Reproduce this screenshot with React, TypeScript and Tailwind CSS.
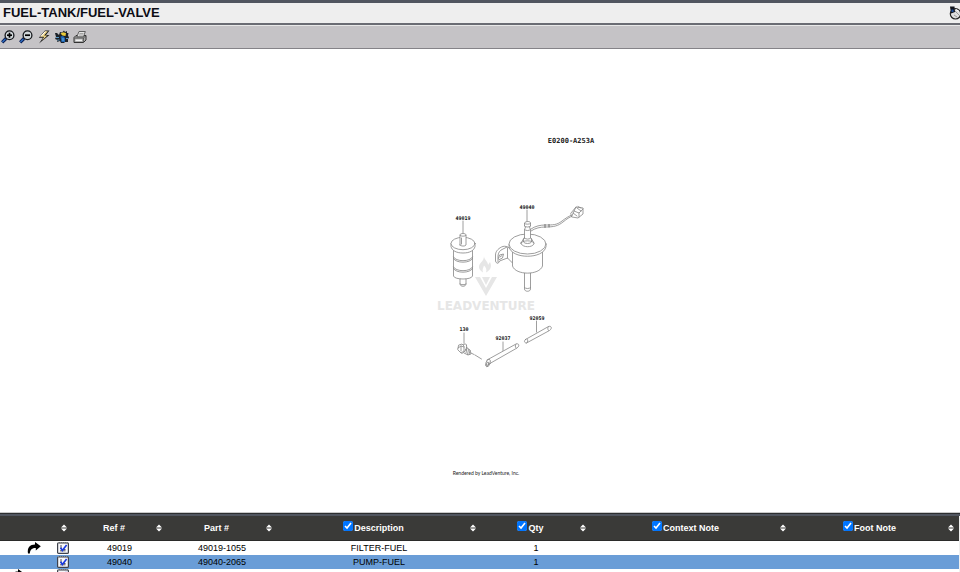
import type { ReactNode } from "react"

interface Column {
  id: string
  label?: string
  toggle?: boolean
  width: string
}

interface Part {
  refNo: string
  partNo: string
  description: string
  qty: string
  selected?: boolean
}

const columns: Column[] = [
  { id: "actions", width: "w-[72px]" },
  { id: "ref", label: "Ref #", width: "w-[95px]" },
  { id: "part", label: "Part #", width: "w-[110px]" },
  { id: "description", label: "Description", toggle: true, width: "w-[204px]" },
  { id: "qty", label: "Qty", toggle: true, width: "w-[110px]" },
  { id: "context", label: "Context Note", toggle: true, width: "w-[200px]" },
  { id: "foot", label: "Foot Note", toggle: true, width: "w-[168px]" },
]

const parts: Part[] = [
  { refNo: "49019", partNo: "49019-1055", description: "FILTER-FUEL", qty: "1" },
  { refNo: "49040", partNo: "49040-2065", description: "PUMP-FUEL", qty: "1", selected: true },
]

function Magnifier({ plus }: { plus?: boolean }) {
  return (
    <svg viewBox="0 0 14 14" className="size-[14px]" fill="none">
      <path d="M5 8.5 1.2 12.3" stroke="#0a1c50" strokeWidth="3.2" />
      <path d="M4.4 9 1.4 12" stroke="#2f6fc4" strokeWidth="1.3" />
      <circle cx="8.5" cy="5.2" r="4.4" fill="#d3d9dc" stroke="#15181c" strokeWidth="1.3" />
      <path d="M6 5.2h5" stroke="#000" strokeWidth="1.7" />
      {plus && <path d="M8.5 2.7v5" stroke="#000" strokeWidth="1.7" />}
    </svg>
  )
}

function BoltIcon() {
  return (
    <svg viewBox="0 0 14 14" className="size-[14px]">
      <path d="M8 .5h4.500L9 5h3.500L2 13.500 6 7.800H1.800z" fill="#222" />
      <path d="M8 1.200h2.800L7 5.600h3.200L5 10.500l2.200-3.700H3.200z" fill="#f5dc8c" />
      <path d="M8.300 1.500 4 6.400" stroke="#fff" />
    </svg>
  )
}

function HotspotIcon() {
  return (
    <svg viewBox="0 0 14 14" className="size-[14px]">
      <path d="M0 3h2l2 2 1-3 2 .5L9 .5l1 1.500 2-1v2h1.500L13 5.500l1 2-1 1.500v3h-3l-1 1H6l-1-2-3 1 .5-2L0 9l1-2z" fill="#1c2229" />
      <path d="M5.500 3.500 8 2.200l3 .8-.5 3-3-.5z" fill="#e8cb3a" />
      <path d="M5.500 6.500 8 6l2 2v4H6.500z" fill="#1d66b5" />
      <path d="M1 7.500h3M2.500 10h2M11 8.500h2" stroke="#5598c8" />
      <path d="M8 8v3" stroke="#72b5e6" />
    </svg>
  )
}

function PrinterIcon() {
  return (
    <svg viewBox="0 0 14 14" className="size-[14px]" strokeLinejoin="round">
      <path d="M1 7.500 3 5.500h10v4.500l-2.500 2.500H1z" fill="#aaa" stroke="#333" />
      <path d="M3.800 6.800 6 1.500h6.300L10.500 6.800z" fill="#e4e4e4" stroke="#444" strokeWidth=".8" />
      <path d="M6.500 3.500h4M6 5h4" stroke="#888" strokeWidth=".7" />
      <path d="M1.500 8h8.800L13 5.800M10.400 8v4" stroke="#444" strokeWidth=".8" fill="none" />
      <path d="M2.500 10.200H9" stroke="#fff" strokeWidth="1.300" />
    </svg>
  )
}

function HelpIcon() {
  return (
    <svg viewBox="0 0 14 14" className="size-[14px]">
      <circle cx="7.500" cy="7.800" r="5.200" fill="#dedede" stroke="#222" strokeWidth="1.200" />
      <path d="M2 .5h4.500L7 6 3 7.500z" fill="#10141c" />
      <path d="M3.500 3.500h2V6h-2z" fill="#1f4f9c" />
      <path d="m7 5 5 5M6 9l3 2" stroke="#999" />
      <path d="m8 3.500 3 2" stroke="#fff" />
    </svg>
  )
}

function SortIcon() {
  return (
    <svg viewBox="0 0 6 8" className="h-[8px] w-[6px]" fill="#fff">
      <path d="M3 .5 6 3.500H0zM3 7.500 0 4.500h6z" />
    </svg>
  )
}

function ArrowIcon() {
  return (
    <svg viewBox="0 0 14 12" className="h-[12px] w-[14px]">
      <path d="M1 11.500C0 5.500 3 2.500 8 2.500V0l5.800 4.300L8.800 8.500V6C5 6 3.200 7.500 2.800 11.500z" fill="#000" />
    </svg>
  )
}

function NoteIcon() {
  return (
    <svg viewBox="0 0 12 12" className="size-[12px]">
      <rect x=".6" y=".8" width="10.800" height="10.600" rx="1" fill="#f7f7fa" stroke="#3d414b" strokeWidth="1.200" />
      <path d="M1 1h10" stroke="#999" strokeWidth="1.400" strokeDasharray="1 1" />
      <path d="M3 4h2M3 6h2M6.500 7.500h2M3 8.800h5.500" stroke="#555" />
      <path d="M3.600 5.800 5.300 8.500 9.600 3" stroke="#1838e0" strokeWidth="1.600" fill="none" />
    </svg>
  )
}

function ToolButton({ label, children }: { label: string; children: ReactNode }) {
  return (
    <button type="button" aria-label={label} className="size-[14px]">
      {children}
    </button>
  )
}

function PartsDiagram() {
  return (
    <svg viewBox="0 49 960 463" className="h-full w-full" fill="none" role="img" aria-label="Fuel tank parts">
      {/* watermark */}
      <g fill="#e6e6e6">
        <path d="M484 256c0 4 4 5 4 9l2-3c2 4 1 8-4 10.500 1-3 0-5-2-7-1 3-2 4-1 7-5-3-5-7-2-10 2-2 3-4 3-6.500z" />
        <path d="M475 277h5l6 11 6-11h5l-11 19z" />
        <path d="M482 277h8l-4 8z" />
        <text x="486" y="310" textAnchor="middle" className="font-['DejaVu_Sans'] text-[12px] font-bold">
          LEADVENTURE
        </text>
      </g>

      <g stroke="#858585" strokeWidth="0.8" strokeLinecap="round" strokeLinejoin="round">
        {/* 49019 filter */}
        <path d="M463 221v12" />
        <path d="M453.500 250v26c1 4 18 4 19 0v-26" />
        <path d="M460 279v5c0 3 6 3 6 0v-5" />
        <path d="M460 284c1 1 5 1 6 0" />
        <path d="M453.500 257c2 5 17 5 19 0M453.500 258.500c2 5 17 5 19 0M453.500 267c2 5 17 5 19 0M453.500 268.500c2 5 17 5 19 0" />
        <path d="M451 243.500v3c1 4 5 6.500 12 6.500s11-2.500 12-6.500v-3" fill="#fff" />
        <ellipse cx="463" cy="243.500" rx="12" ry="6.200" fill="#fff" />
        <path d="M460 245v-10c0-2 6-2 6 0v10c-1 1.500-5 1.500-6 0z" fill="#fff" />
        <path d="M460 235.500c1 1 5 1 6 0M461.500 238v6" />

        {/* 49040 pump */}
        <path d="M527 210v12" />
        <path d="M524.500 272v17c0 3 6 3 6 0v-17M524.500 287.500c1 1.500 5 1.500 6 0" />
        <path d="M512.500 250l-5-3c-2-1-4-1-6 0-4 2-6 5-6 8v6c1 3 3 3 4 0l8-3 5 5" fill="#fff" />
        <path d="M498 262v-6c0-3 2-6 5-7l4-2M507.500 248v10M498.500 258l1-3 4-1-1 4-3 1.500zM500 257l2-1.500" />
        <path d="M512.500 250v16c3 9.500 27 9.500 30 0v-16" fill="#fff" />
        <path d="M509 244.500v2c2 13 35 13 37 0v-2" fill="#fff" />
        <ellipse cx="527.500" cy="244" rx="18.500" ry="10" fill="#fff" />
        <path d="M521 243l3-5h7l3 5c0 5-13 5-13 0z" fill="#fff" />
        <path d="M521 243c1-3 12-3 13 0M523.500 239v3c1 2 7 2 8 0v-3" />
        <path d="M524.500 238v-8c0-1 1-2 1-3l-1-1v-3c1-2 6-2 6 0v3l-1 1 1 3v8c-1 1.500-5 1.500-6 0z" fill="#fff" />
        <path d="M524.500 226c1 1.500 5 1.500 6 0M524.500 229.500c1 1.500 5 1.500 6 0M524.500 223.500c1 1 5 1 6 0" />
        <path d="M531 229c4-3 10-4 14-4 8 0 12 0 17-4 4-3 7-5 10-6M531 231c4-3 10-4 14-4 9 0 13-1 18-5 4-3 6-5 10-6" />
        <path d="M545 224.500v3M549 224.500v2.500" stroke="#555" />
        <path d="M571 213l5-6 7 1v6l-5 4-6-1z" fill="#fff" />
        <path d="M576 207l-2 4 5 2 4-4M574 211l-2 5M579 213v4M577 208l4 3M573 213l4 3M578 206.500l3 1.500" />

        {/* 130 bolt */}
        <path d="M464 333v10" />
        <path d="M466 347l4 3 1 4-3 1-4-2" fill="#fff" />
        <ellipse cx="463.500" cy="348.500" rx="2.600" ry="5" transform="rotate(25 463.500 348.500)" fill="#fff" />
        <path d="M459 345l3-1 2 2v5l-3 2-3-3z" fill="#fff" />
        <path d="M458 348l3-2 3 1M461 346v5M467 348l-1 5M468.500 349.500l-1 5M470 350.500l-1 4" />
        <path d="M471 353l3 1.500M475 355l6.500 4" />

        {/* 92037 and 92059 tubes */}
        <path d="M503 342v10M536.500 321v11" />
        <path d="M487 360l29-16c3-1 4 2 1 4l-28 16" fill="#fff" />
        <ellipse cx="488" cy="363" rx="2" ry="4" transform="rotate(20 488 363)" fill="#fff" />
        <ellipse cx="487.500" cy="364" rx="1" ry="2" transform="rotate(20 487.500 364)" />
        <path d="M525.500 339.500l23-13c3-1 4 2 1 4l-23 12.500c-2 0-3-2-1-3.500zM527 339c1.500 1 1 3-.5 4M516 344c-1 1-1 3 0 4M548.500 326.500c-1 1-1 3 0 4" fill="#fff" />
      </g>

      <g fill="#111" textAnchor="middle" className="font-['DejaVu_Sans_Mono'] text-[5px] font-bold">
        <text x="463" y="220">49019</text>
        <text x="527" y="209">49040</text>
        <text x="464" y="331">130</text>
        <text x="503" y="340">92037</text>
        <text x="537" y="320">92059</text>
      </g>
      <text x="571" y="143" fill="#222" textAnchor="middle" className="font-['DejaVu_Sans_Mono'] text-[7px] font-bold">
        E0200-A253A
      </text>
      <text x="486" y="475" fill="#222" textAnchor="middle" className="font-['Lato',sans-serif] text-[5px]">
        Rendered by LeadVenture, Inc.
      </text>
    </svg>
  )
}

function HeaderCell({ column }: { column: Column }) {
  return (
    <th scope="col" className={`${column.width} h-[24px] p-0 font-bold`}>
      <div className="flex items-center pr-[5px]">
        <div className="flex flex-1 items-center justify-center">
          {column.toggle ? (
            <label className="flex items-center gap-px">
              <input type="checkbox" defaultChecked className="mb-[3px] size-[10px] accent-[#0075ff]" />
              {column.label}
            </label>
          ) : (
            column.label
          )}
        </div>
        <button type="button" aria-label={`Sort by ${column.label ?? "note"}`}>
          <SortIcon />
        </button>
      </div>
    </th>
  )
}

function RowActions({ arrow, nested }: { arrow?: boolean; nested?: boolean }) {
  return (
    <div className={`flex items-center justify-end pr-[3px] ${nested ? "gap-[33px]" : "gap-[16px]"}`}>
      {arrow && <ArrowIcon />}
      <button type="button" aria-label="Part note">
        <NoteIcon />
      </button>
    </div>
  )
}

export default function App() {
  return (
    <div className="flex h-screen flex-col overflow-hidden bg-white font-['Liberation_Sans',Arial,sans-serif] text-black">
      <header className="flex h-[25px] shrink-0 items-center justify-between overflow-hidden border-t-[3px] border-b-2 border-t-[#50555f] border-b-[#6a6c73] bg-[#eeeeee] pl-[3px]">
        <h1 className="text-[13px] leading-5 font-bold text-[#0c0c14]">FUEL-TANK/FUEL-VALVE</h1>
        <button type="button" aria-label="Help" className="-mr-[2px] size-[14px]">
          <HelpIcon />
        </button>
      </header>

      <div className="flex h-[24px] shrink-0 items-center gap-[4px] border-t border-b border-t-[#e8e8e8] border-b-[#858388] bg-[#c5c3c6] px-[1px]">
        <ToolButton label="Zoom in">
          <Magnifier plus />
        </ToolButton>
        <ToolButton label="Zoom out">
          <Magnifier />
        </ToolButton>
        <ToolButton label="Refresh">
          <BoltIcon />
        </ToolButton>
        <ToolButton label="Hotspots">
          <HotspotIcon />
        </ToolButton>
        <ToolButton label="Print">
          <PrinterIcon />
        </ToolButton>
      </div>

      <main className="min-h-0 flex-1">
        <PartsDiagram />
      </main>

      <section className="h-[60px] shrink-0 overflow-hidden border-t border-[#c9c9c9]">
        <div className="h-[3px] border-t border-[#2c2e30] bg-[#50555f]" />
        <div className="bg-[#f0f0f0] pr-px">
          <table className="w-full table-fixed border-collapse bg-white text-center text-[9px] leading-[14px]">
            <thead className="border-b border-[#2b2b2a] bg-[#3a3a38] text-white">
              <tr>
                {columns.map((column) => (
                  <HeaderCell key={column.id} column={column} />
                ))}
              </tr>
            </thead>
            <tbody>
              {parts.map((part) => (
                <tr key={part.refNo} className={part.selected ? "bg-[#6a9dd7]" : "bg-white"}>
                  <td className="p-0">
                    <RowActions arrow={!part.selected} />
                  </td>
                  <td className="p-0">{part.refNo}</td>
                  <td className="p-0">{part.partNo}</td>
                  <td className="p-0">{part.description}</td>
                  <td className="p-0">{part.qty}</td>
                  <td className="p-0" />
                  <td className="p-0" />
                </tr>
              ))}
              <tr>
                <td className="p-0">
                  <RowActions arrow nested />
                </td>
                <td colSpan={6} className="p-0" />
              </tr>
            </tbody>
          </table>
        </div>
      </section>
    </div>
  )
}
